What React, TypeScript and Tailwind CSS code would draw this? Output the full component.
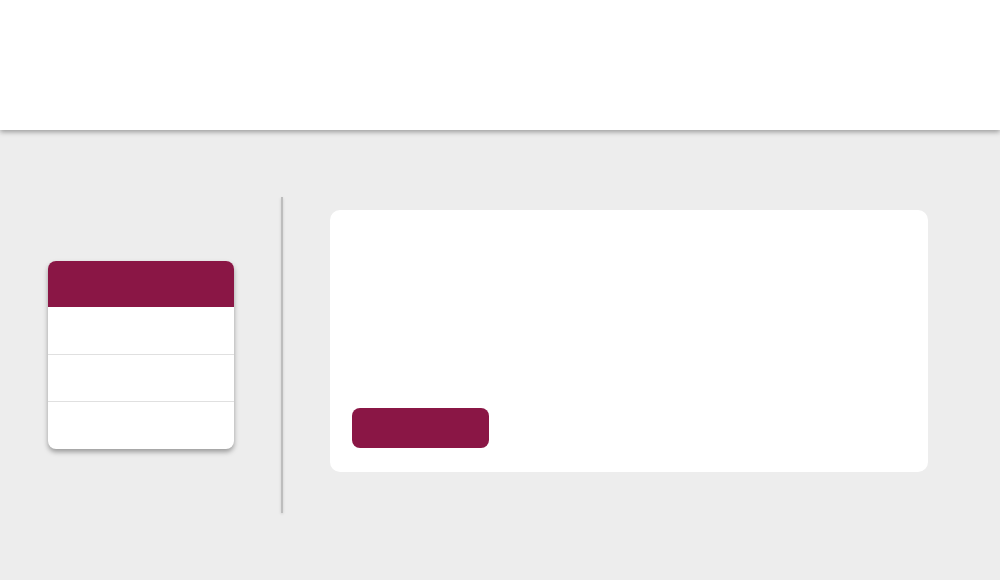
export default function App() {
  return (
    <div className="w-[1000px] h-[580px] bg-[#ededed] overflow-hidden" style={{ fontFamily: "Roboto, sans-serif" }}>
      {/* Top bar */}
      <header className="relative z-10 h-[130px] bg-white shadow-[0_2px_5px_rgba(0,0,0,0.35)]" />

      <main className="h-[450px] flex items-center pl-12">
        {/* Side menu card */}
        <div className="w-[186px] rounded-lg bg-white overflow-hidden shadow-[0_3px_5px_rgba(0,0,0,0.35)]">
          <div className="h-[46px] bg-[#8a1645]" />
          <div className="h-[48px] border-b border-[#e0e0e0]" />
          <div className="h-[47px] border-b border-[#e0e0e0]" />
          <div className="h-[47px]" />
        </div>

        {/* Divider */}
        <div className="ml-[47px] w-[2px] h-[316px] bg-[#bdbdbd] shadow-[0_1px_3px_rgba(0,0,0,0.15)]" />

        {/* Content card */}
        <div className="ml-[47px] mb-[28px] w-[598px] h-[262px] rounded-[10px] bg-white flex flex-col justify-end px-[22px] pb-[24px]">
          <button className="w-[137px] h-[40px] rounded-lg bg-[#8a1645]" />
        </div>
      </main>
    </div>
  );
}
